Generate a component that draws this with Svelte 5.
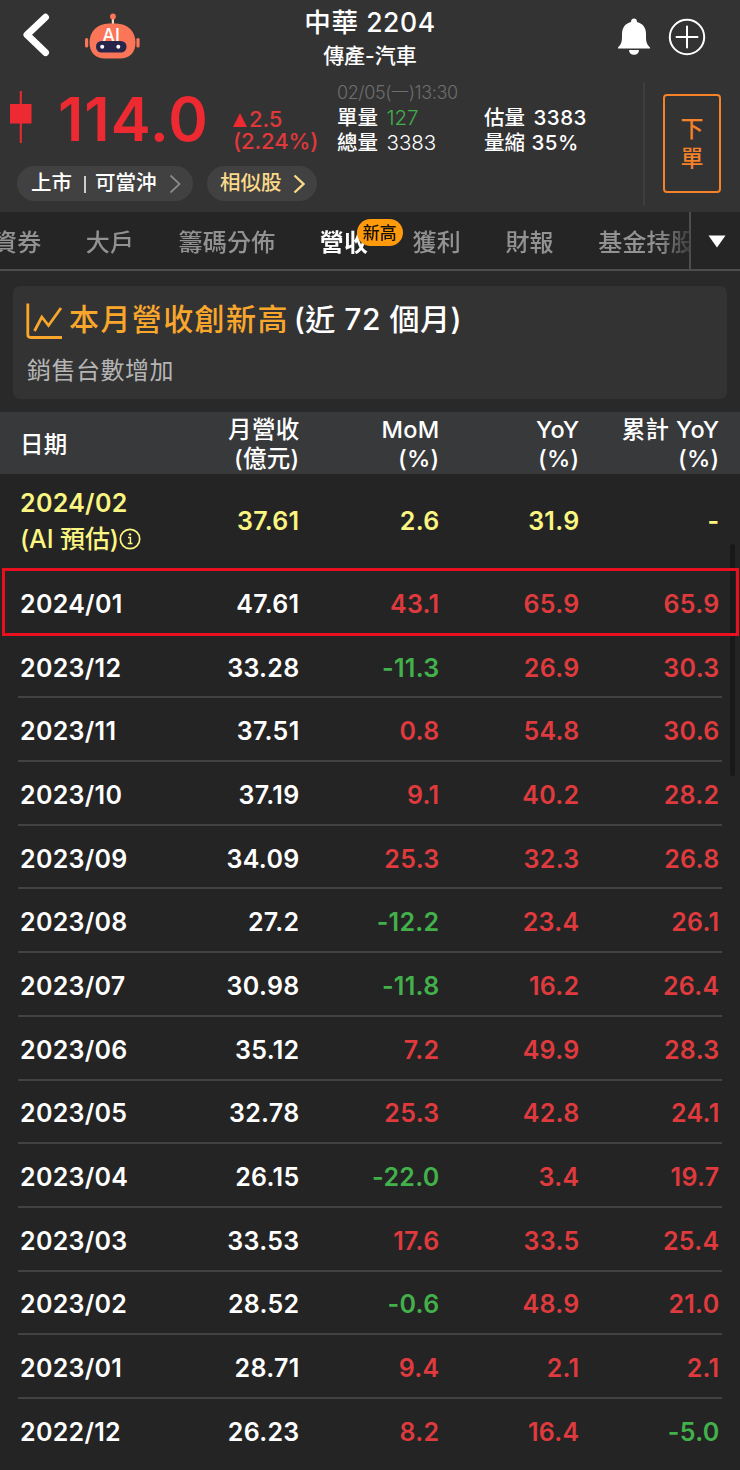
<script>
    const stock = {
        name: "中華",
        code: "2204",
        industry: "傳產-汽車",
        price: "114.0",
        change: "2.5",
        changePercent: "2.24%",
        time: "02/05(一)13:30",
    };

    const tabs = [
        { label: "資券" },
        { label: "大戶" },
        { label: "籌碼分佈" },
        { label: "營收", active: true, badge: "新高" },
        { label: "獲利" },
        { label: "財報" },
        { label: "基金持股" },
    ];

    const columns = [
        ["月營收", "(億元)"],
        ["MoM", "(%)"],
        ["YoY", "(%)"],
        ["累計 YoY", "(%)"],
    ];

    const rows = [
        ["2024/01", "47.61", "43.1", "65.9", "65.9"],
        ["2023/12", "33.28", "-11.3", "26.9", "30.3"],
        ["2023/11", "37.51", "0.8", "54.8", "30.6"],
        ["2023/10", "37.19", "9.1", "40.2", "28.2"],
        ["2023/09", "34.09", "25.3", "32.3", "26.8"],
        ["2023/08", "27.2", "-12.2", "23.4", "26.1"],
        ["2023/07", "30.98", "-11.8", "16.2", "26.4"],
        ["2023/06", "35.12", "7.2", "49.9", "28.3"],
        ["2023/05", "32.78", "25.3", "42.8", "24.1"],
        ["2023/04", "26.15", "-22.0", "3.4", "19.7"],
        ["2023/03", "33.53", "17.6", "33.5", "25.4"],
        ["2023/02", "28.52", "-0.6", "48.9", "21.0"],
        ["2023/01", "28.71", "9.4", "2.1", "2.1"],
        ["2022/12", "26.23", "8.2", "16.4", "-5.0"],
    ];

    let selected = $state("2024/01");
</script>

<div class="app">
    <header>
        <div class="topbar">
            <div class="left">
                <svg width="28" height="46" viewBox="0 0 28 46">
                    <path d="M23.5 5.3 L5 22.8 L23.5 40.5" fill="none" stroke="#fff" stroke-width="7" stroke-linecap="round" stroke-linejoin="round" />
                </svg>
                <svg width="56" height="48" viewBox="0 0 56 48">
                    <rect x="26.8" y="7" width="2.2" height="8" fill="#f6d9c8" />
                    <circle cx="28" cy="4.5" r="2.9" fill="#fb7659" />
                    <rect x="0" y="26" width="3.2" height="9.5" rx="1.5" fill="#fb7659" />
                    <rect x="51.4" y="26" width="3.2" height="9.5" rx="1.5" fill="#fb7659" />
                    <path d="M24 11.5 H31 C43 11.5 50.5 20 50.5 30.5 C50.5 41 44 46.5 35 46.5 H20 C11 46.5 4.5 41 4.5 30.5 C4.5 20 12 11.5 24 11.5 Z" fill="#fb7659" />
                    <text x="26" y="29.5" text-anchor="middle" font-size="18" font-weight="500" fill="#fff">AI</text>
                    <rect x="11" y="29" width="30.5" height="11.5" rx="5.5" fill="#28254a" />
                    <circle cx="17.2" cy="34.8" r="2" fill="#fff" />
                    <circle cx="33.3" cy="34.8" r="2" fill="#fff" />
                </svg>
            </div>
            <div class="title">
                <h1>{stock.name} {stock.code}</h1>
                <p>{stock.industry}</p>
            </div>
            <div class="right">
                <svg width="34" height="38" viewBox="0 0 34 38">
                    <path d="M17 0.5 C19 0.5 20 2 20 4 C26 5.5 29 10 29 16 C29 23 29 25.5 33 29.5 V30.5 H1 V29.5 C5 25.5 5 23 5 16 C5 10 8 5.5 14 4 C14 2 15 0.5 17 0.5 Z M12 32 H22 C22 35 20 36.8 17 36.8 C14 36.8 12 35 12 32 Z" fill="#fff" />
                </svg>
                <svg width="38" height="38" viewBox="0 0 38 38" fill="none" stroke="#fff" stroke-width="2">
                    <circle cx="19" cy="19" r="17.2" />
                    <path d="M19 8.5 V29.5 M8.5 19 H29.5" stroke-linecap="round" />
                </svg>
            </div>
        </div>

        <div class="quote">
            <div class="info">
                <div class="numbers">
                    <svg class="candle" width="22" height="54" viewBox="0 0 22 54">
                        <path d="M10.8 1 V53" stroke="#ed2a31" stroke-width="2" />
                        <rect x="0" y="14" width="21.5" height="19.5" fill="#ed2a31" />
                    </svg>
                    <span class="price">{stock.price}</span>
                    <div class="change">
                        <div><i class="up"></i>{stock.change}</div>
                        <div>({stock.changePercent})</div>
                    </div>
                    <div class="volume">
                        <div class="time">{stock.time}</div>
                        <div class="pair">
                            <div>單量 <span class="down">127</span></div>
                            <div>估量 <b>3383</b></div>
                        </div>
                        <div class="pair">
                            <div>總量 <span>3383</span></div>
                            <div class="tight">量縮 <b>35%</b></div>
                        </div>
                    </div>
                </div>
                <div class="pills">
                    <button class="pill market">
                        <span>上市</span><span class="bar"></span><span>可當沖</span>
                        <svg width="12" height="20" viewBox="0 0 12 20"><path d="M1.5 1.5 L10.5 10 L1.5 18.5" /></svg>
                    </button>
                    <button class="pill similar">
                        <span>相似股</span>
                        <svg width="12" height="20" viewBox="0 0 12 20"><path d="M1.5 1.5 L10.5 10 L1.5 18.5" /></svg>
                    </button>
                </div>
            </div>
            <div class="trade">
                <button class="order"><span>下</span><span>單</span></button>
            </div>
        </div>
    </header>

    <nav>
        <div class="tabs">
            {#each tabs as tab}
                <div class="tab" class:active={tab.active}>
                    {tab.label}
                    {#if tab.badge}
                        <span class="badge">{tab.badge}</span>
                    {/if}
                </div>
            {/each}
        </div>
        <button class="more" aria-label="more">
            <svg width="18" height="13" viewBox="0 0 18 13"><path d="M0.5 0.5 H17.5 L9 12.5 Z" fill="#fff" /></svg>
        </button>
    </nav>

    <section class="notice">
        <div class="headline">
            <svg width="37" height="37" viewBox="0 0 37 37" fill="none" stroke="#f8a62c" stroke-width="2.8">
                <path d="M1.8 0.5 V31.5 Q1.8 34.5 4.8 34.5 H36" />
                <path d="M8.5 28 L15.8 14 L22.5 22.5 L35 5" />
            </svg>
            <strong>本月營收創新高</strong>
            <span>(近 72 個月)</span>
        </div>
        <p>銷售台數增加</p>
    </section>

    <div class="table">
        <div class="row head">
            <div>日期</div>
            {#each columns as column}
                <div class="num">{column[0]}<br />{column[1]}</div>
            {/each}
        </div>
        <div class="row estimate">
            <div>
                <span>2024/02</span>
                <span class="ai">(AI 預估)<svg width="22" height="22" viewBox="0 0 22 22" fill="none" stroke="#fbf581">
                        <circle cx="11" cy="11" r="9.7" stroke-width="1.7" />
                        <path d="M9 9.5 H11.4 V15 M8.8 15.4 H13.5" stroke-width="1.5" />
                        <circle cx="11" cy="6.4" r="1.2" fill="#fbf581" stroke="none" />
                    </svg></span>
            </div>
            <div class="num">37.61</div>
            <div class="num">2.6</div>
            <div class="num">31.9</div>
            <div class="num">-</div>
        </div>
        {#each rows as [month, revenue, ...rates]}
            <!-- svelte-ignore a11y_click_events_have_key_events, a11y_no_static_element_interactions -->
            <div class="row" class:selected={month === selected} onclick={() => (selected = month)}>
                <div>{month}</div>
                <div class="num">{revenue}</div>
                {#each rates as rate}
                    <div class="num {rate.startsWith('-') ? 'down' : 'rise'}">{rate}</div>
                {/each}
            </div>
        {/each}
        <div class="scrollbar"></div>
    </div>
</div>

<style>
    :global(body) {
        margin: 0;
        background: #242424;
    }

    .app {
        width: 740px;
        height: 1470px;
        overflow: hidden;
        background: #292929;
        color: #fff;
        font-family: Inter, "Noto Sans CJK TC", sans-serif;
        font-weight: 500;
    }

    h1,
    p {
        margin: 0;
    }

    button {
        padding: 0;
        border: none;
        background: none;
        color: inherit;
        font: inherit;
    }

    svg {
        display: block;
        flex: none;
    }

    header {
        height: 212px;
        background: #333;
    }

    .topbar {
        display: grid;
        grid-template-columns: 1fr auto 1fr;
        height: 80px;
    }

    .left {
        display: flex;
        align-items: flex-start;
        gap: 35px;
        padding: 12px 0 0 22px;
    }

    .title {
        padding-top: 7px;
        text-align: center;
        white-space: nowrap;
    }

    .title h1 {
        font-size: 26.5px;
        font-weight: 500;
        line-height: 30px;
        letter-spacing: 0.6px;
    }

    .title p {
        margin-top: 6px;
        font-size: 21px;
        line-height: 25px;
    }

    .right {
        display: flex;
        align-items: flex-start;
        justify-content: flex-end;
        gap: 17px;
        padding: 18px 34px 0 0;
    }

    .quote {
        display: flex;
        height: 132px;
    }

    .info {
        width: 643px;
    }

    .numbers {
        display: flex;
        height: 86px;
    }

    .candle {
        margin: 10px 0 0 10px;
    }

    .price {
        width: 175px;
        margin-left: 26px;
        color: #ed2a31;
        font-size: 60px;
        font-weight: 600;
        line-height: 78px;
        letter-spacing: 1px;
    }

    .change {
        width: 104px;
        padding-top: 28px;
        color: #e0383b;
        font-size: 22px;
        line-height: 22px;
        letter-spacing: -0.1px;
    }

    .up {
        display: inline-block;
        margin-right: 2px;
        border: 7px solid transparent;
        border-top: 0;
        border-bottom: 14px solid #ed2a31;
    }

    .volume {
        font-size: 20.5px;
        line-height: 25px;
        white-space: nowrap;
    }

    .time {
        color: #6e6e6e;
        font-size: 18px;
        font-weight: 300;
        letter-spacing: -0.4px;
    }

    .pair {
        display: grid;
        grid-template-columns: 147px auto;
    }

    .pair span {
        margin-left: 3px;
        font-weight: 300;
    }

    .pair b {
        margin-left: 3px;
        font-weight: 500;
        letter-spacing: 0.5px;
    }

    .pair .tight b {
        margin-left: 1px;
    }

    .down,
    .pair .down {
        color: #43b14b;
    }

    .rise {
        color: #df3a3d;
    }

    .pills {
        display: flex;
        gap: 14px;
        margin-left: 17px;
    }

    .pill {
        display: flex;
        align-items: center;
        height: 35px;
        border-radius: 18px;
        background: #414141;
        font-size: 20.5px;
        line-height: 24px;
    }

    .pill span {
        margin-top: -1px;
    }

    .pill path {
        fill: none;
        stroke: #888;
        stroke-width: 1.8;
    }

    .market {
        width: 176px;
        padding-left: 14px;
    }

    .pill .bar {
        width: 2px;
        height: 17px;
        margin: 1px 9px 0 12px;
        background: #ccc;
    }

    .market svg {
        margin-left: 12px;
    }

    .similar {
        width: 110px;
        padding-left: 13px;
        color: #fbd98a;
    }

    .similar svg {
        margin-left: 11px;
    }

    .similar path {
        stroke: #fbd98a;
        stroke-width: 2.4;
    }

    .trade {
        height: 124px;
        margin-top: 2px;
        padding: 12px 0 0 18px;
        border-left: 2px solid #3e3e3e;
        box-sizing: border-box;
    }

    .order {
        display: flex;
        flex-direction: column;
        justify-content: center;
        align-items: center;
        width: 58px;
        height: 99px;
        border: 2px solid #f58129;
        border-radius: 4px;
        color: #f58129;
        font-size: 23px;
        line-height: 29px;
    }

    nav {
        display: flex;
        height: 57px;
        border-bottom: 2px solid #4d4d4d;
        background: #252525;
    }

    .tabs {
        display: flex;
        gap: 44.4px;
        width: 696px;
        margin-left: -7px;
        overflow: hidden;
        mask-image: linear-gradient(to right, #000 665px, transparent 705px);
    }

    .tab {
        position: relative;
        color: #929292;
        font-size: 24px;
        line-height: 61px;
        letter-spacing: 0.2px;
        white-space: nowrap;
    }

    .tab.active {
        color: #fff;
        font-weight: 600;
    }

    .badge {
        position: absolute;
        top: 7px;
        left: 37px;
        width: 46px;
        height: 27px;
        border-radius: 14px;
        background: #fe9a0b;
        color: #17110a;
        font-size: 17px;
        font-weight: 500;
        line-height: 28px;
        text-align: center;
        letter-spacing: 0;
    }

    .more {
        display: flex;
        align-items: center;
        justify-content: center;
        flex: 1;
        padding: 2px 0 0 2px;
        border-left: 2px solid #4d4d4d;
    }

    .notice {
        height: 113px;
        margin: 15px 13px 13px;
        padding: 1px 14px 0 13px;
        border-radius: 7px;
        background: #333;
        box-sizing: border-box;
    }

    .headline {
        display: flex;
        align-items: center;
        height: 68px;
        font-size: 30px;
        line-height: 36px;
        white-space: nowrap;
    }

    .headline strong {
        margin: -4px 5px 0 6px;
        color: #f8a62c;
        font-weight: 500;
        letter-spacing: 1.4px;
    }

    .headline span {
        margin-top: -4px;
        letter-spacing: 0.5px;
    }

    .notice p {
        margin-left: 1px;
        color: #b5b5b5;
        font-size: 24px;
        line-height: 32px;
        letter-spacing: 0.5px;
        font-weight: 400;
    }

    .table {
        position: relative;
        height: 1060px;
        background: #242424;
        font-size: 25px;
        font-weight: 560;
        letter-spacing: 0.3px;
    }

    .row {
        position: relative;
        display: grid;
        grid-template-columns: 159.5px 120px 140px 140px 140px;
        align-items: center;
        height: 63.69px;
        padding: 2px 20px 0;
        box-sizing: border-box;
    }

    .row::after {
        content: "";
        position: absolute;
        right: 18px;
        bottom: 0;
        left: 18px;
        height: 2px;
        background: #424242;
    }

    .num {
        text-align: right;
        white-space: nowrap;
    }

    .head {
        height: 62px;
        background: #38393b;
        font-size: 23.5px;
        font-weight: 500;
        line-height: 29px;
    }

    .head::after,
    .estimate::after,
    .row:nth-last-child(2)::after {
        display: none;
    }

    .estimate {
        height: 97px;
        padding: 0 20px 4px;
        color: #fbf581;
    }

    .estimate span {
        display: block;
        line-height: 36px;
    }

    .estimate .ai {
        display: flex;
        align-items: center;
        font-weight: 500;
        letter-spacing: -0.1px;
        white-space: nowrap;
    }

    /* frame sits slightly outside the row, over its neighbours' edges */
    .selected::after {
        z-index: 2;
        top: -3px;
        right: 1px;
        bottom: -1px;
        left: 2px;
        height: auto;
        border: 3px solid #e8101f;
        background: none;
    }

    .scrollbar {
        position: absolute;
        top: 132px;
        right: 5px;
        width: 5px;
        height: 232px;
        border-radius: 3px;
        background: #191919;
    }
</style>
